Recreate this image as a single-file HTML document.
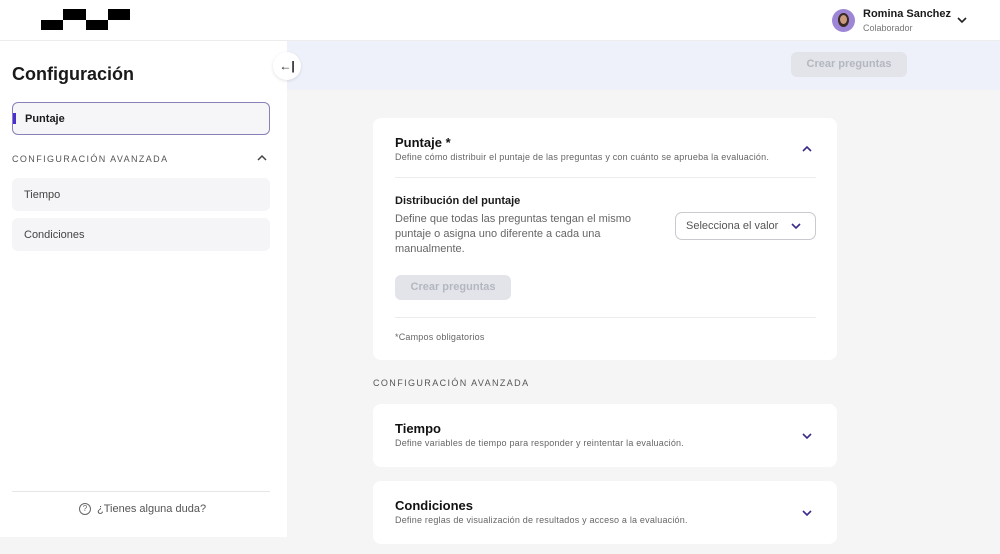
<!DOCTYPE html>
<html><head><meta charset="utf-8"><style>
*{box-sizing:border-box;margin:0;padding:0}
body{width:1000px;height:554px;overflow:hidden;background:#f5f5f6;font-family:"Liberation Sans",sans-serif;color:#1a1a1a;position:relative}
.a{position:absolute}
.card{position:absolute;background:#fff;border-radius:8px;left:373px;width:464px}
.t{font-weight:bold;font-size:13px;color:#111}
.s{font-size:9px;color:#666;letter-spacing:0.2px}
.chev{position:absolute;width:12px;height:8px}
</style></head><body>
<div class="a" style="left:0;top:0;width:1000px;height:41px;background:#fff;border-bottom:1px solid #ececec"></div>
<div class="a" style="left:41px;top:20px;width:22px;height:10px;background:#000"></div>
<div class="a" style="left:63px;top:9px;width:23px;height:11px;background:#000"></div>
<div class="a" style="left:86px;top:20px;width:22px;height:10px;background:#000"></div>
<div class="a" style="left:108px;top:9px;width:22px;height:11px;background:#000"></div>
<div class="a" style="left:832px;top:9px;width:23px;height:23px;border-radius:50%;background:#9d86d6;overflow:hidden"><div class="a" style="left:6px;top:4px;width:11px;height:14px;border-radius:50%;background:#3a2a22"></div><div class="a" style="left:8px;top:6px;width:7px;height:9px;border-radius:50%;background:#c99a7c"></div></div>
<div class="a" style="left:863px;top:8px;font-size:11px;font-weight:bold">Romina Sanchez</div>
<div class="a" style="left:863px;top:23px;font-size:9px;color:#777">Colaborador</div>
<svg class="chev" style="left:956px;top:16px" viewBox="0 0 12 8"><path d="M2 2l4 4 4-4" stroke="#222" stroke-width="1.6" fill="none"/></svg>
<div class="a" style="left:287px;top:41px;width:713px;height:49px;background:#eef1fa"></div>
<div class="a" style="left:791px;top:52px;width:116px;height:25px;border-radius:6px;background:#e2e4ea;color:#b4b7bf;font-size:11px;font-weight:bold;text-align:center;line-height:25px">Crear preguntas</div>
<div class="a" style="left:0;top:41px;width:287px;height:496px;background:#fff"></div>
<div class="a" style="left:273px;top:52px;width:28px;height:28px;border-radius:50%;background:#fff;box-shadow:0 1px 3px rgba(0,0,0,.12);font-size:12px;font-weight:bold;text-align:center;line-height:28px">&#8592;|</div>
<div class="a" style="left:12px;top:64px;font-size:18px;font-weight:bold">Configuración</div>
<div class="a" style="left:12px;top:102px;width:258px;height:33px;border:1px solid #8a80b8;border-radius:6px;background:#f6f6f9"></div>
<div class="a" style="left:13px;top:113px;width:3px;height:11px;background:#4a2fd0"></div>
<div class="a" style="left:25px;top:113px;font-size:11px;font-weight:bold">Puntaje</div>
<div class="a" style="left:12px;top:154px;font-size:9px;letter-spacing:1.4px;color:#555">CONFIGURACIÓN AVANZADA</div>
<svg class="chev" style="left:256px;top:154px" viewBox="0 0 12 8"><path d="M2 6l4-4 4 4" stroke="#444" stroke-width="1.5" fill="none"/></svg>
<div class="a" style="left:12px;top:178px;width:258px;height:33px;border-radius:6px;background:#f5f5f7;font-size:11px;color:#444;padding:11px 12px">Tiempo</div>
<div class="a" style="left:12px;top:218px;width:258px;height:33px;border-radius:6px;background:#f5f5f7;font-size:11px;color:#444;padding:11px 12px">Condiciones</div>
<div class="a" style="left:12px;top:491px;width:258px;height:1px;background:#e6e6e6"></div>
<div class="a" style="left:79px;top:503px;width:12px;height:12px;border:1.3px solid #666;border-radius:50%;font-size:8px;color:#666;text-align:center;line-height:10px">?</div>
<div class="a" style="left:97px;top:503px;font-size:11px;color:#555">¿Tienes alguna duda?</div>

<div class="card" style="top:118px;height:242px">
<div class="a t" style="left:22px;top:17px">Puntaje *</div>
<div class="a s" style="left:22px;top:34px">Define cómo distribuir el puntaje de las preguntas y con cuánto se aprueba la evaluación.</div>
<svg class="chev" style="left:428px;top:27px" viewBox="0 0 12 8"><path d="M2 6l4-4 4 4" stroke="#3a2a8a" stroke-width="1.6" fill="none"/></svg>
<div class="a" style="left:22px;top:59px;width:421px;height:1px;background:#ececec"></div>
<div class="a" style="left:22px;top:77px;font-size:11px;font-weight:bold">Distribución del puntaje</div>
<div class="a" style="left:22px;top:94px;width:250px;font-size:11px;line-height:15px;color:#666">Define que todas las preguntas tengan el mismo puntaje o asigna uno diferente a cada una manualmente.</div>
<div class="a" style="left:302px;top:94px;width:141px;height:28px;border:1px solid #c9c9cf;border-radius:7px;font-size:11px;color:#555;padding:7px 10px">Selecciona el valor</div>
<svg class="chev" style="left:417px;top:104px" viewBox="0 0 12 8"><path d="M2 2l4 4 4-4" stroke="#3a2a8a" stroke-width="1.6" fill="none"/></svg>
<div class="a" style="left:22px;top:157px;width:116px;height:25px;border-radius:6px;background:#e2e4ea;color:#b4b7bf;font-size:11px;font-weight:bold;text-align:center;line-height:25px">Crear preguntas</div>
<div class="a" style="left:22px;top:199px;width:421px;height:1px;background:#ececec"></div>
<div class="a s" style="left:22px;top:214px">*Campos obligatorios</div>
</div>
<div class="a" style="left:373px;top:378px;font-size:9px;letter-spacing:1.4px;color:#555">CONFIGURACIÓN AVANZADA</div>
<div class="card" style="top:404px;height:63px">
<div class="a t" style="left:22px;top:17px">Tiempo</div>
<div class="a s" style="left:22px;top:34px">Define variables de tiempo para responder y reintentar la evaluación.</div>
<svg class="chev" style="left:428px;top:28px" viewBox="0 0 12 8"><path d="M2 2l4 4 4-4" stroke="#3a2a8a" stroke-width="1.6" fill="none"/></svg>
</div>
<div class="card" style="top:481px;height:63px">
<div class="a t" style="left:22px;top:17px">Condiciones</div>
<div class="a s" style="left:22px;top:34px">Define reglas de visualización de resultados y acceso a la evaluación.</div>
<svg class="chev" style="left:428px;top:28px" viewBox="0 0 12 8"><path d="M2 2l4 4 4-4" stroke="#3a2a8a" stroke-width="1.6" fill="none"/></svg>
</div>
</body></html>
